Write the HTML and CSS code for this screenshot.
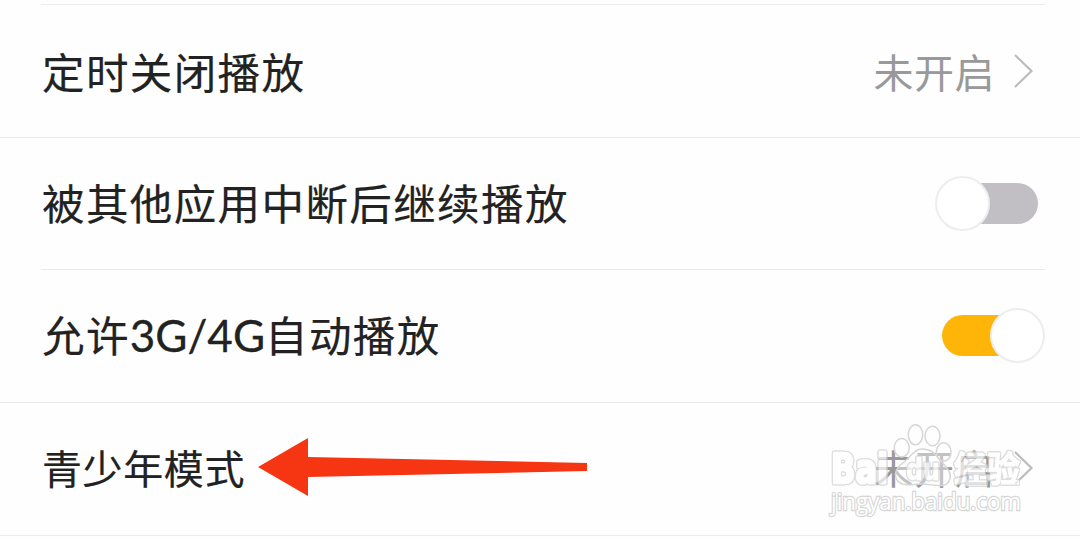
FILE: index.html
```html
<!DOCTYPE html>
<html lang="zh-CN">
<head>
<meta charset="utf-8">
<title>设置</title>
<link rel="stylesheet" href="styles.css">
</head>
<body>
<main class="settings">
  <section class="row row-first">
    <span class="label">定时关闭播放</span>
    <span class="value">未开启</span>
    <svg class="chevron" viewBox="0 0 22 36"><path d="M2 2 18.500 18 2 34"/></svg>
  </section>
  <section class="row row-inset">
    <span class="label">被其他应用中断后继续播放</span>
    <span class="toggle"><span class="knob"></span></span>
  </section>
  <section class="row row-cell">
    <span class="label">允许<span class="latin">3G/4G</span>自动播放</span>
    <span class="toggle toggle-on"><span class="knob"></span></span>
  </section>
  <section class="row row-teen">
    <span class="label label-small">青少年模式</span>
    <span class="value">未开启</span>
    <svg class="chevron" viewBox="0 0 22 36"><path d="M2 2 18.500 18 2 34"/></svg>
  </section>
</main>
<svg class="arrow" viewBox="0 0 330 60"><path d="M0 30 50 1V20L329 26V34L50 40V59Z"/></svg>
<svg class="watermark" viewBox="0 0 249 110">
  <text class="brand" x="10" y="63" textLength="57" lengthAdjust="spacingAndGlyphs">Bai</text>
  <g class="paw">
    <ellipse cx="80.700" cy="27.700" rx="7.500" ry="9.300"/>
    <ellipse cx="94.500" cy="14.700" rx="7.200" ry="10"/>
    <ellipse cx="111.500" cy="16" rx="7.500" ry="9.700"/>
    <ellipse cx="122.700" cy="32" rx="7.300" ry="9.300"/>
    <path d="M101 29C93 29 90 37 83 42C76 47 73 52 75 58C79 68 90 64 101 64C113 64 125 70 129 59C131 52 124 46 119 40C114 34 111 29 101 29Z"/>
  </g>
  <text class="brand brand-du" x="85" y="60" textLength="34" lengthAdjust="spacingAndGlyphs">du</text>
  <text class="brand brand-cn" x="133" y="62" textLength="66" lengthAdjust="spacingAndGlyphs">经验</text>
  <text class="site" x="10" y="90" textLength="190" lengthAdjust="spacingAndGlyphs">jingyan.baidu.com</text>
</svg>
</body>
</html>
```

FILE: styles.css
```css
* { box-sizing: border-box; }
body {
  position: relative;
  width: 1080px;
  height: 540px;
  margin: 0;
  overflow: hidden;
  background: #fefefe;
  color: #222;
  font-family: "Noto Sans CJK SC", sans-serif;
}
.settings { padding-top: 4px; }
.row {
  display: flex;
  align-items: center;
  height: 133px;
  padding: 3px 42px 0 42px;
  background: linear-gradient(#ebebeb, #ebebeb) 0 0 / 100% 1px no-repeat;
}
.row-first, .row-inset + .row-cell {
  background-position: 41px 0;
  background-size: 1004px 1px;
}
.row-inset { height: 132px; padding-top: 0; }
.row-cell { padding-right: 35px; padding-top: 0; }
.row-teen { height: 134px; padding-top: 0; border-bottom: 1px solid #ebebeb; }
.label {
  flex: 1;
  padding-bottom: 2px;
  font-size: 42.5px;
  line-height: 60px;
  letter-spacing: 1.4px;
  white-space: nowrap;
  -webkit-text-stroke: 0.2px #222;
}
.row-first .label { padding-bottom: 3px; }
.latin { font-family: Lato, sans-serif; font-size: 44px; letter-spacing: 0; -webkit-text-stroke: 0.3px #222; }
.label-small { padding-bottom: 3px; font-size: 40px; letter-spacing: 0.6px; }
.value {
  padding-bottom: 3px;
  color: #999;
  font-size: 40px;
  letter-spacing: 0.5px;
  line-height: 60px;
}
.chevron {
  width: 22px;
  height: 36px;
  margin: -2px 3px 0 18px;
  fill: none;
  stroke: #bcbcbc;
  stroke-width: 2.2;
}
.toggle {
  display: flex;
  align-items: center;
  width: 96px;
  height: 41px;
  border-radius: 21px;
  background: #c1bfc4;
}
.toggle .knob {
  flex: none;
  width: 55px;
  height: 55px;
  margin-left: -7px;
  border: 2px solid #ededed;
  border-radius: 50%;
  background: #fff;
}
.toggle-on { margin-right: 7px; background: #ffb507; }
.toggle-on .knob { margin-left: 48px; }
.arrow {
  position: absolute;
  left: 258px;
  top: 437px;
  width: 330px;
  height: 60px;
  fill: #f63512;
}
.watermark {
  position: absolute;
  left: 821px;
  top: 420px;
  width: 249px;
  height: 110px;
  fill: #fff;
  stroke: #d6d6d6;
  stroke-width: 1.5;
}
.paw { fill: rgba(255, 255, 255, .4); }
.brand {
  fill: #fff;
  stroke: #fff;
  stroke-width: 2.5;
  stroke-linejoin: round;
  opacity: .7;
  filter: drop-shadow(1px 0 0 #d0d0d0) drop-shadow(-1px 0 0 #d0d0d0) drop-shadow(0 1px 0 #d0d0d0) drop-shadow(0 -1px 0 #d0d0d0);
  font-family: "DejaVu Sans", sans-serif;
  font-size: 40px;
  font-weight: 700;
}
.brand-du { font-size: 30px; stroke-width: 0.5; }
.brand-cn { font-family: "Noto Sans CJK SC", sans-serif; font-size: 35px; stroke-width: 1; }
.site { font-family: "Open Sans", sans-serif; font-size: 23px; font-weight: 400; stroke-width: 2.4; paint-order: stroke; }
```
